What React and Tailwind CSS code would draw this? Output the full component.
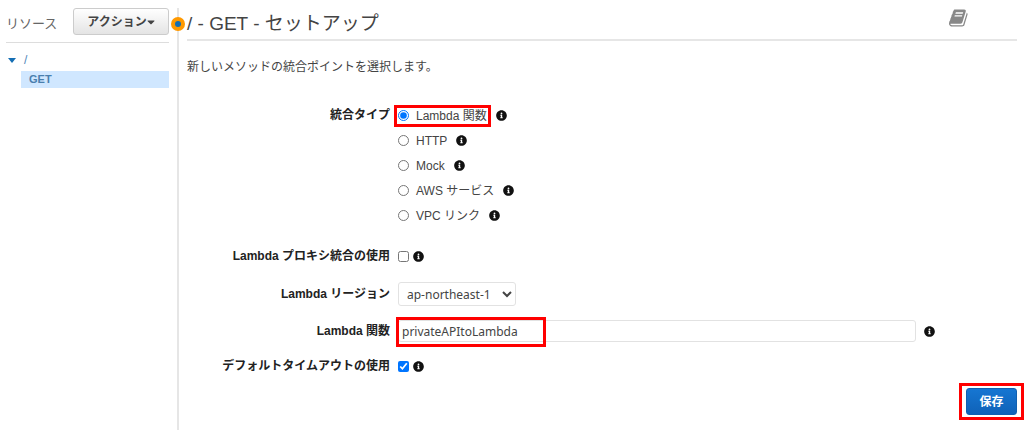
import { useState } from "react";
import { FaCaretDown, FaInfoCircle } from "react-icons/fa";

const INTEGRATION_TYPES = [
  { id: "lambda", label: "Lambda 関数", marked: true },
  { id: "http", label: "HTTP" },
  { id: "mock", label: "Mock" },
  { id: "aws", label: "AWS サービス" },
  { id: "vpc", label: "VPC リンク" },
];

function Info({ className = "" }) {
  return <FaInfoCircle className={`h-[11px] w-[11px] shrink-0 text-[#111] ${className}`} />;
}

// One line of the form: bold label on the right edge of its column, control after it.
function Row({ label, htmlFor, children }) {
  return (
    <div className="flex items-center gap-2">
      <label htmlFor={htmlFor} className="w-[203px] shrink-0 text-right font-bold text-[#222]">
        {label}
      </label>
      {children}
    </div>
  );
}

function BookIcon() {
  return (
    <svg className="h-5 w-5" viewBox="0 0 1792 1792" fill="currentColor">
      <path d="M1639 478q40 57 18 129l-275 906q-19 64-76.5 107.5t-122.5 43.5h-923q-77 0-148.5-53.5t-99.5-131.5q-24-67-2-127 0-4 3-27t4-37q1-8-3-21.5t-3-19.5q2-11 8-21t16.5-23.5 16.5-23.5q23-38 45-91.5t30-91.5q3-10 .5-30t-.5-28q3-11 17-28t17-23q21-36 42-92t25-90q1-9-2.5-32t.5-28q4-13 22-30.5t22-22.5q19-26 42.5-84.5t27.5-96.5q1-8-3-25.5t-2-26.5q2-8 9-18t18-23 17-21q8-12 16.5-30.5t15-35 16-36 19.5-32 26.5-23.5 36-11.5 47.5 5.5l-1 3q38-9 51-9h761q74 0 114 56t18 130l-274 906q-36 119-71.5 153.5t-128.5 34.5h-869q-27 0-38 15-11 16-1 43 24 70 144 70h923q29 0 56-15.5t35-41.5l300-987q7-22 5-57 38 15 59 43zm-1064 2q-4 13 2 22.5t20 9.5h608q13 0 25.5-9.5t16.5-22.5l21-64q4-13-2-22.5t-20-9.5h-608q-13 0-25.5 9.5t-16.5 22.5zm-83 256q-4 13 2 22.5t20 9.5h608q13 0 25.5-9.5t16.5-22.5l21-64q4-13-2-22.5t-20-9.5h-608q-13 0-25.5 9.5t-16.5 22.5z" />
    </svg>
  );
}

function Sidebar() {
  return (
    <aside className="relative w-[179px] shrink-0 border-r-2 border-[#e6e6e6] pr-2 pl-1.5">
      <div className="flex items-start justify-between border-b border-[#ddd] pb-[7px]">
        <h2 className="pt-2 text-[13px] leading-4 text-[#666]">リソース</h2>
        <button className="flex h-[27px] w-24 items-center justify-center rounded-[3px] border border-[#ccc] bg-linear-to-b from-white to-[#e4e4e4] text-xs font-bold text-[#444]">
          アクション
          <FaCaretDown className="h-3 w-2" />
        </button>
      </div>
      <nav className="pt-1.5">
        <a href="#root" className="flex h-[22px] items-center gap-2 pl-0.5 text-xs text-[#4f86b8]">
          <svg className="h-[5px] w-2" viewBox="0 0 8 5">
            <path d="M0 0h8L4 5z" fill="#146eb4" />
          </svg>
          /
        </a>
        <a
          href="#get"
          className="ml-[15px] block bg-[#d0e7ff] pl-2 text-[11px] leading-[17px] font-bold text-[#4a7fae]"
        >
          GET
        </a>
      </nav>
      {/* drag handle on the divider */}
      <span className="absolute top-[9px] -right-2 grid h-3.5 w-3.5 place-items-center rounded-full bg-[#ff9900]">
        <span className="h-1.5 w-1.5 rounded-full bg-[#146eb4]" />
      </span>
    </aside>
  );
}

export default function App() {
  const [type, setType] = useState("lambda");
  const [proxy, setProxy] = useState(false);
  const [timeoutOn, setTimeoutOn] = useState(true);
  const [fn, setFn] = useState("privateAPItoLambda");

  return (
    <div className="flex min-h-screen bg-white pt-2 font-['Liberation_Sans','Noto_Sans_CJK_JP',sans-serif] text-xs text-[#444]">
      <Sidebar />
      <main className="min-w-0 flex-1 pr-[7px] pl-2">
        <header className="flex items-start justify-between border-b-2 border-[#e6e6e6]">
          <h1 className="h-[31px] text-[19px] leading-8">/ - GET - セットアップ</h1>
          <button aria-label="ドキュメント" className="mr-12 text-[#888]">
            <BookIcon />
          </button>
        </header>

        <p className="pt-4 leading-5">新しいメソッドの統合ポイントを選択します。</p>

        <form className="pt-[26px]" onSubmit={(e) => e.preventDefault()}>
          <fieldset className="flex gap-2" aria-labelledby="type-label">
            <span
              id="type-label"
              className="w-[203px] shrink-0 text-right leading-[25px] font-bold text-[#222]"
            >
              統合タイプ
            </span>
            <div>
              {INTEGRATION_TYPES.map((t) => (
                <div key={t.id} className="flex h-[25px] items-center gap-[9px]">
                  <label className="relative flex items-center gap-[7px]">
                    <input
                      type="radio"
                      name="type"
                      checked={type === t.id}
                      onChange={() => setType(t.id)}
                      className="h-[11px] w-[11px]"
                    />
                    {t.label}
                    {t.marked && (
                      <span className="pointer-events-none absolute -inset-x-1 -inset-y-[3px] border-3 border-[#f00]" />
                    )}
                  </label>
                  <Info />
                </div>
              ))}
            </div>
          </fieldset>

          <div className="flex flex-col gap-3.5 pt-4">
            <Row label="Lambda プロキシ統合の使用" htmlFor="proxy">
              <div className="flex h-6 items-center gap-1">
                <input
                  id="proxy"
                  type="checkbox"
                  checked={proxy}
                  onChange={(e) => setProxy(e.target.checked)}
                  className="h-[11px] w-[11px]"
                />
                <Info />
              </div>
            </Row>
            <Row label="Lambda リージョン" htmlFor="region">
              <select
                id="region"
                className="h-6 w-[118px] rounded-[3px] border border-[#e2e2e2] bg-white pl-1 font-['Noto_Sans',sans-serif] text-xs"
              >
                <option>ap-northeast-1</option>
              </select>
            </Row>
            <Row label="Lambda 関数" htmlFor="fn">
              <div className="relative min-w-0 flex-1">
                <input
                  id="fn"
                  type="text"
                  value={fn}
                  onChange={(e) => setFn(e.target.value)}
                  className="block h-[22px] w-full rounded-[3px] border border-[#e2e2e2] px-[3px] font-['Noto_Sans',sans-serif] text-xs outline-none"
                />
                <span className="pointer-events-none absolute -top-[3px] -left-0.5 h-[30px] w-[150px] border-3 border-[#f00]" />
              </div>
              <Info className="mr-[82px]" />
            </Row>
            <Row label="デフォルトタイムアウトの使用" htmlFor="timeout">
              <div className="flex h-5 items-center gap-1">
                <input
                  id="timeout"
                  type="checkbox"
                  checked={timeoutOn}
                  onChange={(e) => setTimeoutOn(e.target.checked)}
                  className="h-[11px] w-[11px]"
                />
                <Info />
              </div>
            </Row>
          </div>

          <div className="flex justify-end pt-3">
            <div className="relative">
              <button className="block h-[27px] w-[51px] rounded-[3px] border border-[#1060b0] bg-linear-to-b from-[#1676d2] to-[#0f62b8] text-xs font-bold text-white">
                保存
              </button>
              <span className="pointer-events-none absolute -inset-x-[7px] -inset-y-[5px] border-3 border-[#f00]" />
            </div>
          </div>
        </form>
      </main>
    </div>
  );
}
